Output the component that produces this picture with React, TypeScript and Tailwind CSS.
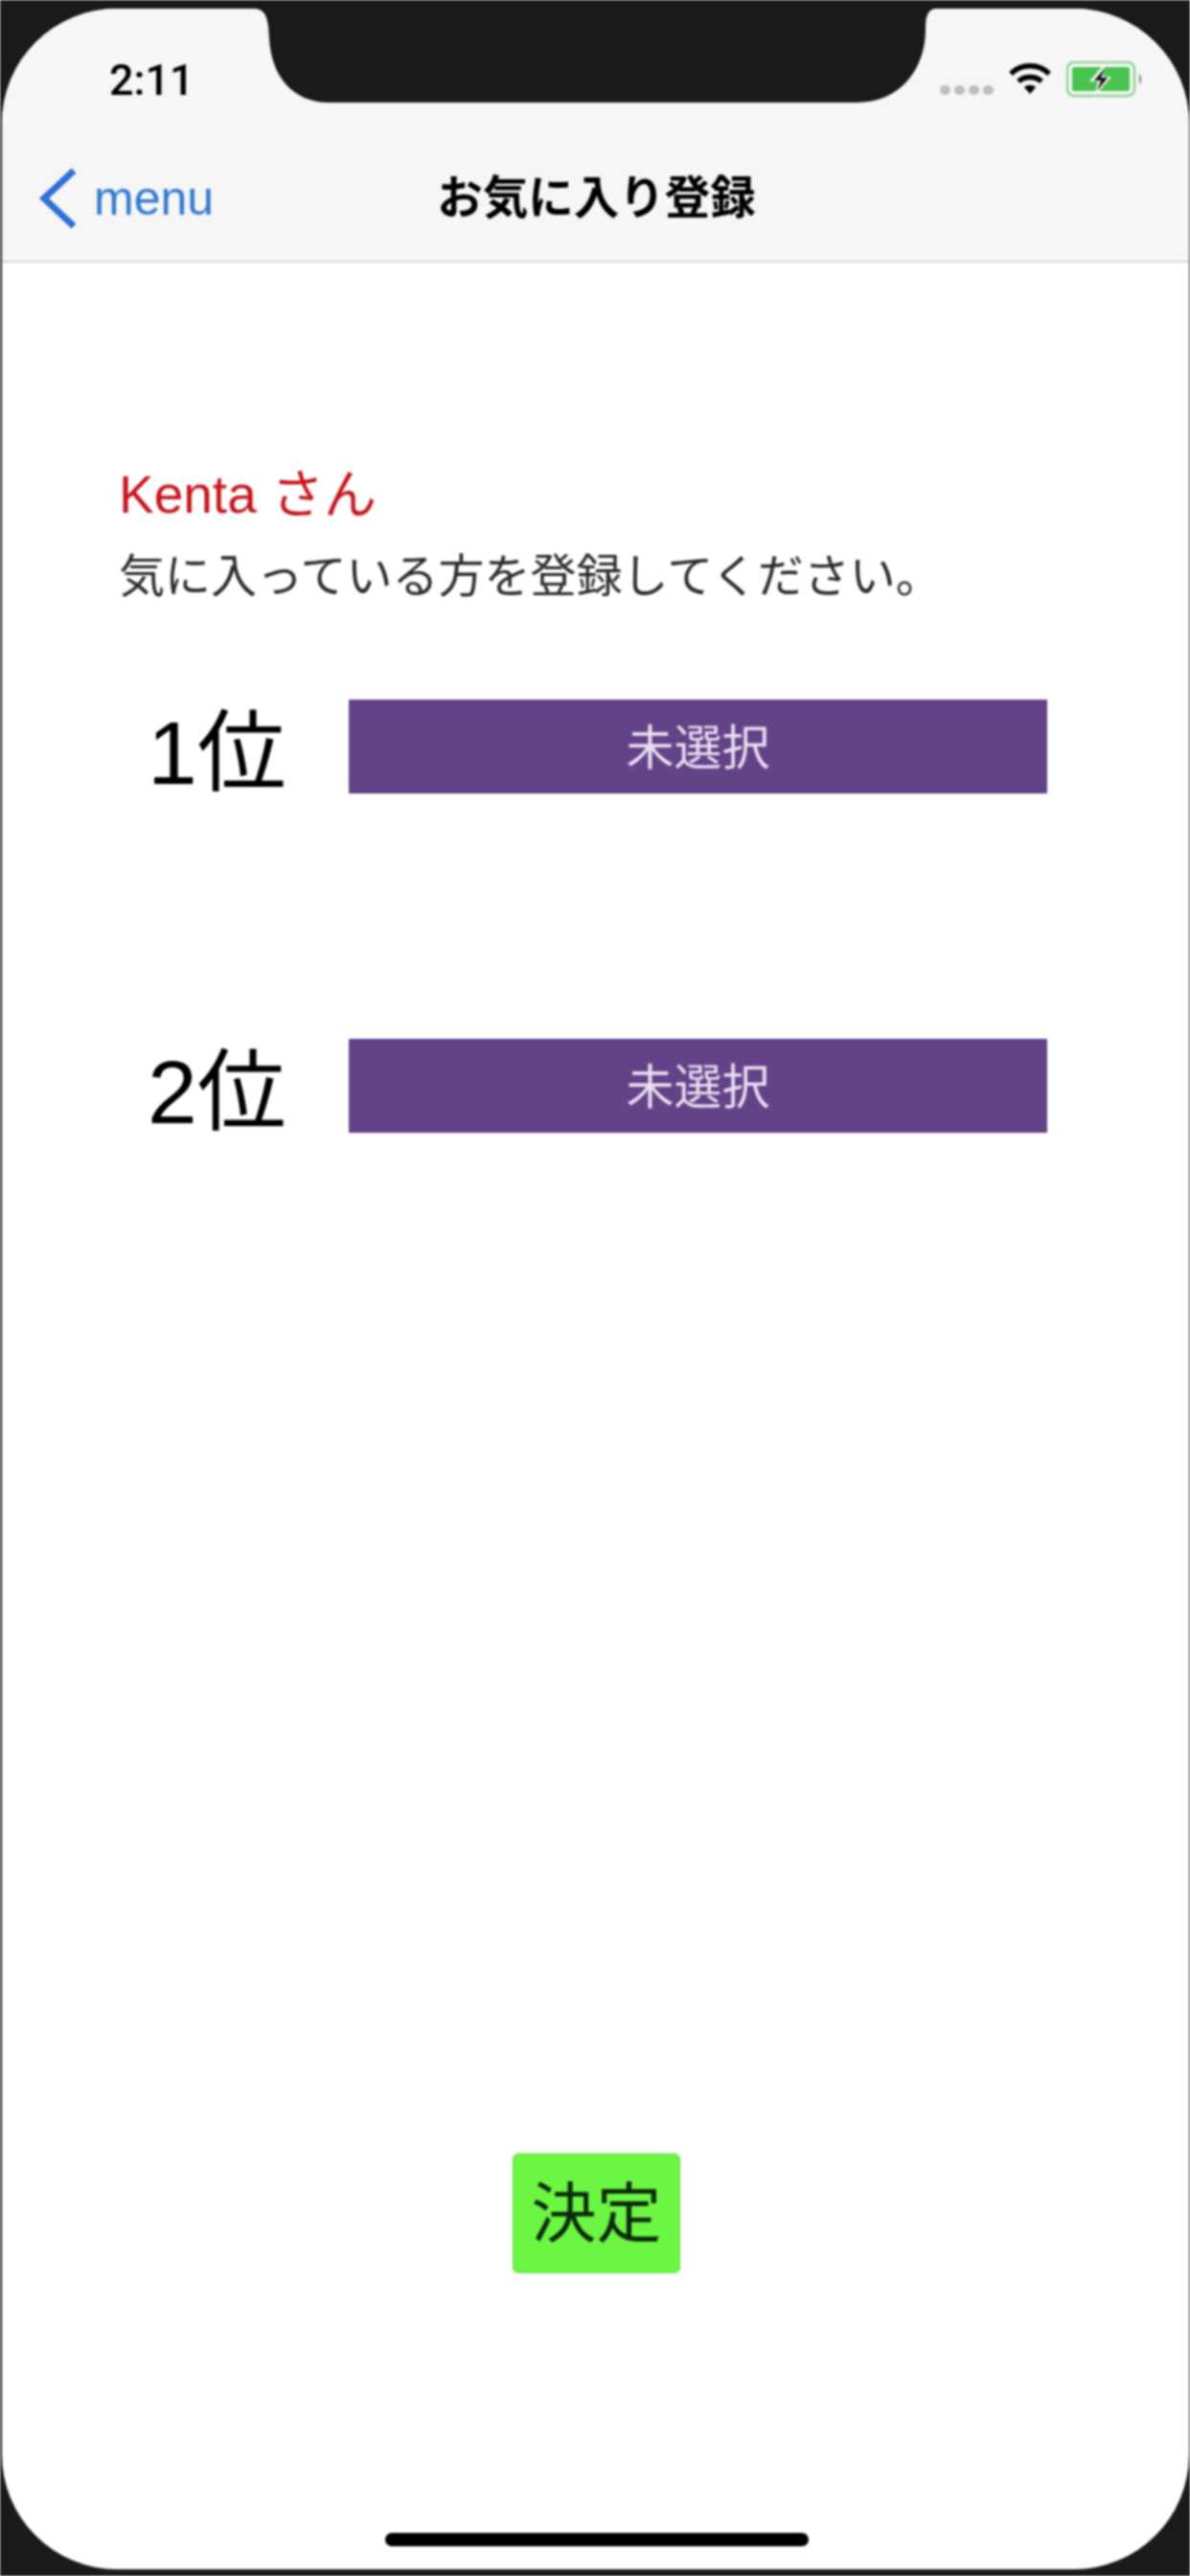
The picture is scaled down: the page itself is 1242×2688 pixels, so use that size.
import React from 'react';

const jp = "font-['Liberation_Sans','Noto_Sans_CJK_JP',sans-serif]";

const Notch = () => (
  <svg className="absolute left-[-2px] top-[-9px]" width="1242" height="120" viewBox="0 0 1242 120">
    <path
      d="M262 0 H980 V9 H976 C968 10 966 18 966 30 C966 74 938 107 894 107 H344 C304 107 283 78 281 40 C280 20 278 10 266 9 H262 Z"
      fill="#1a1a1a"
    />
  </svg>
);

const Wifi = () => (
  <svg width="46" height="34" viewBox="0 0 46 34" fill="none" stroke="#000" strokeWidth="5.5">
    <path d="M3 11 C14 0 32 0 43 11" />
    <path d="M11 19 C17 13 29 13 35 19" />
    <path d="M17 25 L23 32 L29 25 C26 22 20 22 17 25 Z" fill="#000" stroke="none" />
  </svg>
);

const Battery = () => (
  <svg width="80" height="38" viewBox="0 0 80 38">
    <rect x="1" y="1" width="70" height="35" rx="7" fill="none" stroke="#8fd092" strokeWidth="2.5" />
    <rect x="6" y="6" width="60" height="25" rx="2" fill="#48c44e" />
    <path d="M76 13 C79 15 79 22 76 24 Z" fill="#8a8a8a" />
    <path d="M41 1 L24 21 H33 L29 37 L47 16 H38 Z" fill="#f6f6f7" />
    <path d="M40 7 L29 20 H36 L32 31 L43 17 H36 Z" fill="#111" />
  </svg>
);

const RankRow = ({ label }: { label: string }) => (
  <div className="flex items-center pl-[152px]">
    <div className="w-[210px] mt-[14px] text-[93px] leading-[84px] text-black">{label}</div>
    <button className="w-[729px] h-[98px] pt-[3px] bg-[#634287] text-[#e9dff0] text-[50px] leading-none">未選択</button>
  </div>
);

export default function App() {
  return (
    <div className={`w-[1242px] h-[2688px] bg-[#1a1a1a] pt-[9px] pr-[1px] pl-[2px] pb-[7px] blur-[1px] ${jp}`}>
      <div className="relative h-full rounded-[120px] bg-white overflow-hidden flex flex-col">
        <header className="relative h-[265px] shrink-0 bg-[#f6f6f7] border-b-2 border-[#d6d6d8]">
          <Notch />
          {/* status bar */}
          <div className="flex items-center justify-between h-[148px] pl-[112px] pr-[48px]">
            <span className="font-['Roboto',sans-serif] text-[45px] leading-none font-medium text-black">2:11</span>
            <div className="flex items-center">
              <div className="flex gap-[4px] mt-[22px] mr-[15px]">
                <span className="w-[11px] h-[10px] rounded-full bg-[#bdbdbd]" />
                <span className="w-[11px] h-[10px] rounded-full bg-[#bdbdbd]" />
                <span className="w-[11px] h-[10px] rounded-full bg-[#bdbdbd]" />
                <span className="w-[11px] h-[10px] rounded-full bg-[#bdbdbd]" />
              </div>
              <Wifi />
              <div className="ml-[15px]">
                <Battery />
              </div>
            </div>
          </div>
          {/* nav bar */}
          <div className="grid grid-cols-[1fr_auto_1fr] items-center h-[100px]">
            <div className="flex items-center pl-[38px] text-[#3478d0]">
              <svg width="42" height="66" viewBox="0 0 42 66" fill="none" stroke="#2f6fd6" strokeWidth="7">
                <polyline points="37,4 6,33 37,62" />
              </svg>
              <span className="ml-[16px] text-[50px] leading-none">menu</span>
            </div>
            <div className="ml-[2px] text-[47.5px] leading-none font-bold text-black">お気に入り登録</div>
            <div />
          </div>
        </header>

        <main className="flex-1 flex flex-col">
          <div className="pl-[122px] pt-[199px]">
            <p className="text-[55px] leading-[86px] text-[#c4161c]">Kenta さん</p>
            <p className="mt-[11px] text-[48px] leading-[64px] text-[#2a2a2a]">気に入っている方を登録してください。</p>
          </div>
          <div className="flex flex-col gap-[256px] mt-[96px]">
            <RankRow label="1位" />
            <RankRow label="2位" />
          </div>
          <div className="flex justify-center mt-auto mb-[309px] pl-[2px]">
            <button className="w-[175px] h-[125px] rounded-[6px] bg-[#6cf542] border border-[#5ed83a] text-[68px] leading-none text-[#0a2a0a]">
              決定
            </button>
          </div>
        </main>

        <div className="absolute bottom-[24px] left-[400px] w-[442px] h-[14px] rounded-full bg-black" />
      </div>
    </div>
  );
}
